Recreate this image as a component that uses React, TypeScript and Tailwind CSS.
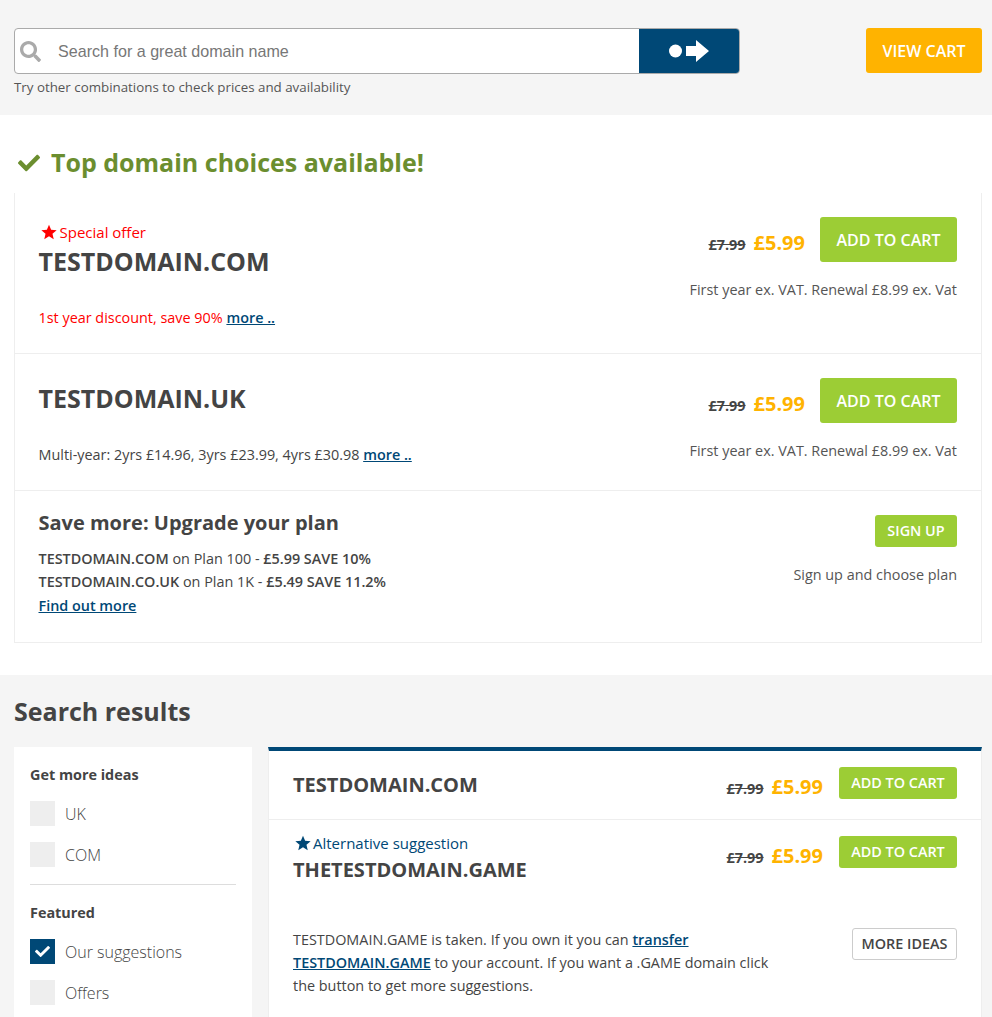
import React from 'react'
import { FaCheck, FaSearch } from 'react-icons/fa'

const font = { fontFamily: '"Open Sans", sans-serif' }

const StarIcon = ({ className }: { className: string }) => (
  <svg viewBox="0 0 24 24" className={className}>
    <path d="M12 1l3.2 7.6 8.3.7-6.3 5.4 1.9 8.1L12 18.5 4.9 22.8l1.9-8.1L.5 9.3l8.3-.7z" />
  </svg>
)

const Price = ({ compact }: { compact?: boolean }) => (
  <div className={compact ? 'flex items-baseline pt-[5px]' : 'flex items-baseline pt-[11px]'}>
    <span className="text-[14.4px] font-bold text-[#444] line-through">£7.99</span>
    <span className="ml-2 text-[20px] font-bold text-[#ffb300]">£5.99</span>
  </div>
)

const CartButton = ({ small }: { small?: boolean }) => (
  <button
    className={
      small
        ? 'h-8 w-[118px] rounded-[3px] bg-[#9ccd35] text-[14.4px] font-semibold text-white'
        : 'h-[45px] w-[137px] rounded-[3px] bg-[#9ccd35] text-[16px] font-semibold text-white'
    }
  >
    ADD TO CART
  </button>
)

const Tick = ({ label, checked }: { label: string; checked?: boolean }) => (
  <div className="flex h-[25px] items-center">
    <span className={checked ? 'flex h-[25px] w-[25px] items-center justify-center bg-[#004876]' : 'h-[25px] w-[25px] bg-[#eeeeee]'}>
      {checked && <FaCheck className="h-[15px] w-[15px] text-white" />}
    </span>
    <span className="ml-[10px] text-[16px] font-light text-[#444]">{label}</span>
  </div>
)

export default function App() {
  return (
    <div className="h-[1017px] w-[992px] overflow-hidden bg-[#f5f5f5] text-[#444]" style={font}>
      {/* Search bar */}
      <div className="flex h-[115px] items-start justify-between px-[10px] pl-[14px] pt-[28px]">
        <div>
          <div className="flex h-[46px] w-[726px] overflow-hidden rounded-[4px] border border-[#aaaaaa] bg-white">
            <div className="flex w-[43px] items-center pl-[5px]">
              <FaSearch className="h-[21px] w-[21px] text-[#aaaaaa]" />
            </div>
            <div className="flex flex-1 items-center pt-[1px] font-['Liberation_Sans',sans-serif] text-[16.1px] text-[#777]">Search for a great domain name</div>
            <div className="flex w-[100px] items-center justify-center bg-[#004876]">
              <svg width="40" height="24" viewBox="0 0 40 24" className="fill-white">
                <circle cx="6.5" cy="12" r="6.5" />
                <path d="M17 7h10V1l13 11-13 11v-6H17z" />
              </svg>
            </div>
          </div>
          <p className="mt-[4px] text-[13.33px] text-[#555]">Try other combinations to check prices and availability</p>
        </div>
        <button className="h-[45px] w-[116px] rounded-[3px] bg-[#ffb300] text-[16px] font-semibold text-white">VIEW CART</button>
      </div>

      {/* Top choices */}
      <div className="h-[560px] bg-white px-[10px] pl-[14px]">
        <div className="flex h-[78px] items-end pb-[14px] pl-[4px]">
          <FaCheck className="mb-[5px] h-[22px] w-[22px] text-[#6b8e2f]" />
          <h1 className="ml-[11px] text-[25px] font-bold leading-[34px] text-[#6b8e2f]">Top domain choices available!</h1>
        </div>
        <div className="border-x border-b border-[#eeeeee]">
          <div className="flex h-[161px] justify-between border-b border-[#eeeeee] pl-[23.5px] pr-[24px] pt-[29px]">
            <div>
              <div className="flex items-center pl-[2px] text-[15px] leading-[20px] text-[#ff0000]">
                <StarIcon className="mr-[3px] h-[16px] w-[16px] fill-[#ff0000]" />
                Special offer
              </div>
              <div className="text-[25px] font-bold leading-[38px]">TESTDOMAIN.COM</div>
              <p className="mt-[27px] text-[14.4px] text-[#ff0000]">
                1st year discount, save 90% <a className="font-semibold text-[#004876] underline">more ..</a>
              </p>
            </div>
            <div className="-mt-[5px] flex flex-col items-end">
              <div className="flex items-start">
                <Price />
                <span className="w-[15px]" />
                <CartButton />
              </div>
              <p className="mt-[17px] text-[14.4px] text-[#555]">First year ex. VAT. Renewal £8.99 ex. Vat</p>
            </div>
          </div>
          <div className="flex h-[137px] justify-between border-b border-[#eeeeee] pl-[23.5px] pr-[24px] pt-[24px]">
            <div>
              <div className="text-[25px] font-bold leading-[40px]">TESTDOMAIN.UK</div>
              <p className="mt-[26px] text-[14.4px]">
                Multi-year: 2yrs £14.96, 3yrs £23.99, 4yrs £30.98 <a className="font-semibold text-[#004876] underline">more ..</a>
              </p>
            </div>
            <div className="flex flex-col items-end">
              <div className="flex items-start">
                <Price />
                <span className="w-[15px]" />
                <CartButton />
              </div>
              <p className="mt-[17px] text-[14.4px] text-[#555]">First year ex. VAT. Renewal £8.99 ex. Vat</p>
            </div>
          </div>
          <div className="flex h-[151px] justify-between pl-[23.5px] pr-[24px] pt-[18px]">
            <div>
              <div className="text-[20px] font-bold leading-[28px]">Save more: Upgrade your plan</div>
              <p className="mt-[10px] text-[14.4px] leading-[23px]">
                <span className="font-semibold">TESTDOMAIN.COM</span> on Plan 100 - <span className="font-semibold">£5.99 SAVE 10%</span>
              </p>
              <p className="text-[14.4px] leading-[23px]">
                <span className="font-semibold">TESTDOMAIN.CO.UK</span> on Plan 1K - <span className="font-semibold">£5.49 SAVE 11.2%</span>
              </p>
              <a className="text-[14.4px] font-semibold leading-[25px] text-[#004876] underline">Find out more</a>
            </div>
            <div className="flex flex-col items-end pt-[6px]">
              <button className="h-8 w-[82px] rounded-[3px] bg-[#9ccd35] text-[14.4px] font-semibold text-white">SIGN UP</button>
              <p className="mt-[17px] text-[14.4px] text-[#555]">Sign up and choose plan</p>
            </div>
          </div>
        </div>
      </div>

      {/* Search results */}
      <div className="px-[10px] pl-[14px]">
        <h2 className="flex h-[72px] items-center pt-[2px] text-[25px] font-bold">Search results</h2>
        <div className="flex gap-4">
          <aside className="h-[400px] w-[238px] bg-white px-4 pt-[16px]">
            <div className="text-[14.4px] font-bold leading-[24px]">Get more ideas</div>
            <div className="mt-[14px] flex flex-col gap-4">
              <Tick label="UK" />
              <Tick label="COM" />
            </div>
            <div className="mt-[17px] border-t border-[#dddddd]" />
            <div className="mt-[16px] text-[14.4px] font-bold leading-[24px]">Featured</div>
            <div className="mt-[14px] flex flex-col gap-4">
              <Tick label="Our suggestions" checked />
              <Tick label="Offers" />
            </div>
          </aside>
          <main className="h-[400px] w-[714px] border-x border-t-4 border-[#eeeeee] border-t-[#004876] bg-white">
            <div className="flex h-[69px] items-start justify-between border-b border-[#eeeeee] px-[24px] pt-[16px]">
              <div className="text-[20px] font-bold leading-[36px]">TESTDOMAIN.COM</div>
              <div className="flex items-start">
                <Price compact />
                <span className="w-4" />
                <CartButton small />
              </div>
            </div>
            <div className="flex justify-between px-[24px] pt-[16px]">
              <div className="-mt-[3px]">
                <div className="flex items-center pl-[2px] text-[15px] leading-[20px] text-[#004876]">
                  <StarIcon className="mr-[2px] h-[16px] w-[16px] fill-[#004876]" />
                  Alternative suggestion
                </div>
                <div className="pt-px text-[20px] font-bold leading-[32px]">THETESTDOMAIN.GAME</div>
              </div>
              <div className="flex items-start">
                <Price compact />
                <span className="w-4" />
                <CartButton small />
              </div>
            </div>
            <div className="flex justify-between px-[24px] pt-[42px]">
              <p className="w-[490px] text-[14.4px] leading-[23px]">
                TESTDOMAIN.GAME is taken. If you own it you can <a className="font-semibold text-[#004876] underline">transfer TESTDOMAIN.GAME</a> to your account. If you want a .GAME domain click the button to get more suggestions.
              </p>
              <button className="h-8 w-[105px] rounded-[3px] border border-[#cccccc] bg-white text-[14.4px] font-semibold text-[#444]">MORE IDEAS</button>
            </div>
          </main>
        </div>
      </div>
    </div>
  )
}
